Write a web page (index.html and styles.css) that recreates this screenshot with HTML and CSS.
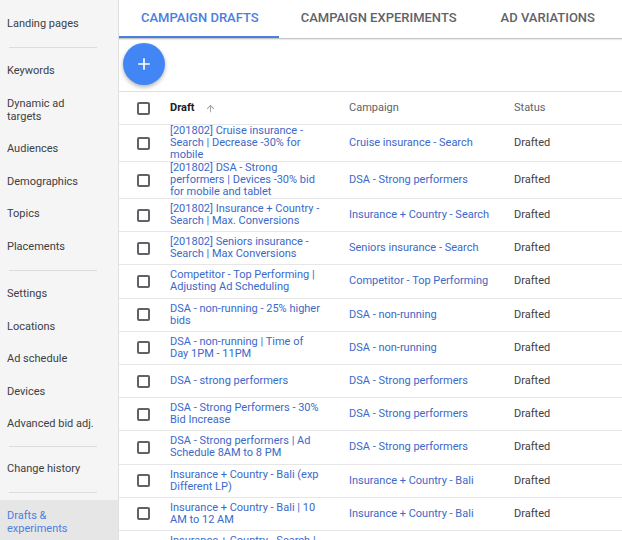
FILE: index.html
```html
<!DOCTYPE html>
<html lang="en">
<head>
    <meta charset="UTF-8">
    <meta name="viewport" content="width=device-width, initial-scale=1.0">
    <title>Drafts &amp; experiments</title>
    <link rel="stylesheet" href="styles.css">
</head>
<body>
    <div class="page">
        <nav class="sidebar">
            <div class="nav-item">Landing pages</div>
            <div class="nav-divider"></div>
            <div class="nav-item">Keywords</div>
            <div class="nav-item">Dynamic ad targets</div>
            <div class="nav-item">Audiences</div>
            <div class="nav-item">Demographics</div>
            <div class="nav-item">Topics</div>
            <div class="nav-item">Placements</div>
            <div class="nav-divider"></div>
            <div class="nav-item">Settings</div>
            <div class="nav-item">Locations</div>
            <div class="nav-item">Ad schedule</div>
            <div class="nav-item">Devices</div>
            <div class="nav-item">Advanced bid adj.</div>
            <div class="nav-divider tight"></div>
            <div class="nav-item">Change history</div>
            <div class="nav-divider"></div>
            <div class="nav-item active">Drafts &amp; experiments</div>
        </nav>

        <main class="content">
            <div class="tabs">
                <div class="tab active">Campaign drafts</div>
                <div class="tab">Campaign experiments</div>
                <div class="tab">Ad variations</div>
            </div>

            <div class="fab-row">
                <button class="fab" title="New draft">
                    <svg viewBox="0 0 24 24" width="20" height="20"><path fill="#fff" d="M19 13h-6v6h-2v-6H5v-2h6V5h2v6h6v2z"/></svg>
                </button>
            </div>

            <table class="drafts">
                <thead>
                    <tr>
                        <th class="col-check"><span class="checkbox"></span></th>
                        <th class="col-draft">
                            <span class="sort">Draft
                                <svg viewBox="0 0 24 24" width="11" height="11"><path fill="#a0a0a0" d="M4 12l1.41 1.41L11 7.83V20h2V7.83l5.58 5.59L20 12l-8-8-8 8z"/></svg>
                            </span>
                        </th>
                        <th class="col-campaign">Campaign</th>
                        <th class="col-status">Status</th>
                    </tr>
                </thead>
                <tbody id="draftRows"></tbody>
            </table>
        </main>
    </div>

    <script>
        const drafts = [
            ['[201802] Cruise insurance - Search | Decrease -30% for mobile', 'Cruise insurance - Search'],
            ['[201802] DSA - Strong performers | Devices -30% bid for mobile and tablet', 'DSA - Strong performers'],
            ['[201802] Insurance + Country - Search | Max. Conversions', 'Insurance + Country - Search'],
            ['[201802] Seniors insurance - Search | Max Conversions', 'Seniors insurance - Search'],
            ['Competitor - Top Performing | Adjusting Ad Scheduling', 'Competitor - Top Performing'],
            ['DSA - non-running - 25% higher bids', 'DSA - non-running'],
            ['DSA - non-running | Time of Day 1PM - 11PM', 'DSA - non-running'],
            ['DSA - strong performers', 'DSA - Strong performers'],
            ['DSA - Strong Performers - 30% Bid Increase', 'DSA - Strong performers'],
            ['DSA - Strong performers | Ad Schedule 8AM to 8 PM', 'DSA - Strong performers'],
            ['Insurance + Country - Bali (exp Different LP)', 'Insurance + Country - Bali'],
            ['Insurance + Country - Bali | 10 AM to 12 AM', 'Insurance + Country - Bali'],
            ['Insurance + Country - Search | Max. Conversions', 'Insurance + Country - Search']
        ];

        const draftRows = document.getElementById('draftRows');

        drafts.forEach(([name, campaign]) => {
            const row = document.createElement('tr');
            row.innerHTML = `
                <td class="col-check"><span class="checkbox"></span></td>
                <td class="col-draft"><a href="#">${name}</a></td>
                <td class="col-campaign"><a href="#">${campaign}</a></td>
                <td class="col-status">Drafted</td>
            `;
            draftRows.appendChild(row);
        });
    </script>
</body>
</html>
```

FILE: styles.css
```css
body {
    margin: 0;
    font-family: Roboto, "Liberation Sans", Arial, sans-serif;
    font-size: 11px;
    color: #3c4043;
    background: #fff;
    overflow: hidden;
}
.page {
    display: flex;
    height: 540px;
}
.sidebar {
    width: 118px;
    flex-shrink: 0;
    padding-top: 7px;
    background: #f5f5f5;
    border-right: 1px solid #e0e0e0;
}
.nav-item {
    padding: 9.75px 17px 9.75px 7px;
    line-height: 13px;
    color: #3c4043;
}
.nav-item.active {
    background: #e6e6e6;
    color: #4a80e0;
    padding-top: 9px;
}
.nav-divider {
    height: 1px;
    background: #dcdcdc;
    margin: 7px 21px 7px 9px;
}
.nav-divider.tight {
    margin-top: 5.5px;
    margin-bottom: 5.5px;
}
.content {
    flex: 1;
    min-width: 0;
}
.tabs {
    display: flex;
    height: 38px;
    border-bottom: 1px solid #c6c6c6;
    box-shadow: 0 1px 1px rgba(0, 0, 0, 0.08);
}
.tab {
    padding: 0 20px 0 22px;
    line-height: 36px;
    border-bottom: 2px solid transparent;
    font-size: 13px;
    font-weight: 500;
    text-transform: uppercase;
    color: #5f6368;
}
.tab.active {
    color: #4a80e0;
    border-bottom-color: #4a80e0;
}
.tab:last-child {
    padding-left: 24px;
}
.fab-row {
    height: 48px;
}
.fab {
    width: 42px;
    height: 42px;
    margin: 4px 0 0 4px;
    border: none;
    border-radius: 50%;
    background: #4285f4;
    box-shadow: 0 2px 4px rgba(0, 0, 0, 0.3);
    display: flex;
    align-items: center;
    justify-content: center;
    padding: 0;
}
table.drafts {
    width: 100%;
    table-layout: fixed;
    border-collapse: collapse;
    border-top: 1px solid #e0e0e0;
}
.drafts th, .drafts td {
    padding: 0;
    text-align: left;
    vertical-align: middle;
    border-bottom: 1px solid #e6e6e6;
    line-height: 12px;
}
.drafts thead tr {
    height: 33px;
}
.drafts tbody tr {
    height: 33.2px;
}
.drafts th {
    font-weight: 400;
    color: #5f6368;
}
.col-check {
    width: 33px;
    padding-left: 18px !important;
}
.col-draft {
    width: 154px;
    padding-right: 25px !important;
}
.col-campaign {
    width: 165px;
}
.sort {
    display: inline-flex;
    align-items: center;
    gap: 10px;
    font-weight: 700;
    color: #202124;
}
.checkbox {
    display: block;
    width: 9px;
    height: 9px;
    border: 2px solid #5f6368;
    border-radius: 2px;
}
.drafts a {
    color: #3b69c9;
    text-decoration: none;
}
.col-status {
    color: #3c4043;
}
```
